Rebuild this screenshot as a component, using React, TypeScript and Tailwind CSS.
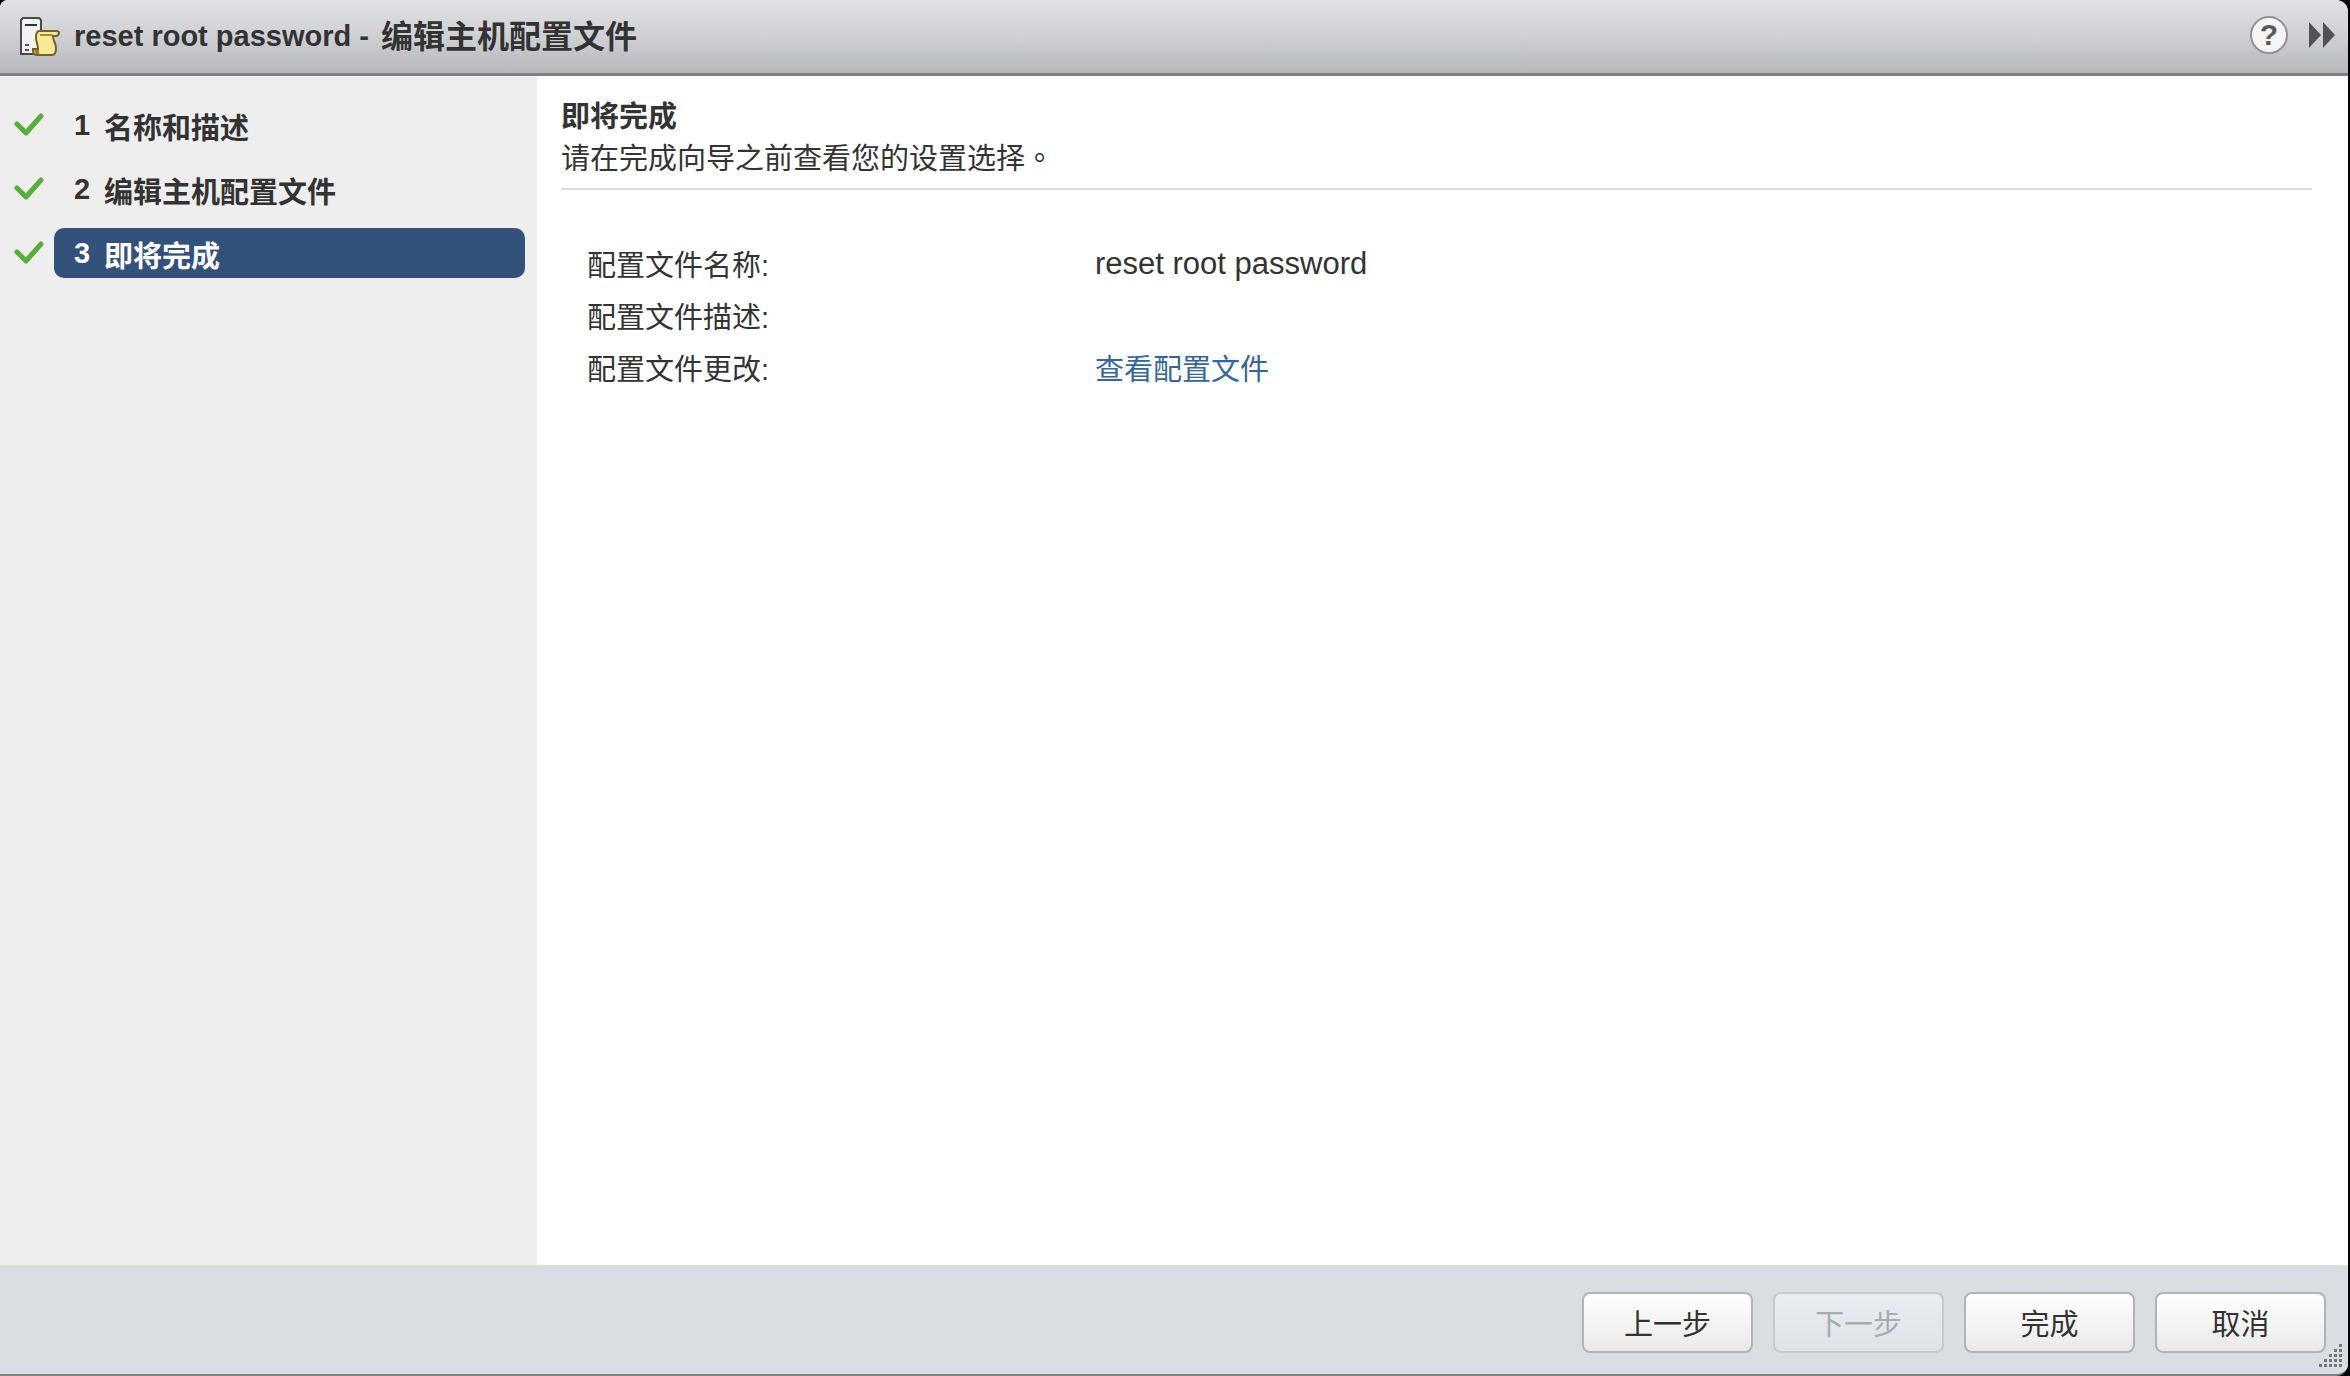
interface Step {
  id: number;
  label: string;
  active?: boolean;
}

interface WizardButton {
  label: string;
  disabled?: boolean;
}

const steps: Step[] = [
  { id: 1, label: '名称和描述' },
  { id: 2, label: '编辑主机配置文件' },
  { id: 3, label: '即将完成', active: true },
];

const buttons: WizardButton[] = [
  { label: '上一步' },
  { label: '下一步', disabled: true },
  { label: '完成' },
  { label: '取消' },
];

function ProfileIcon() {
  return (
    <svg width="40" height="40" viewBox="0 0 40 40" fill="none" aria-hidden="true">
      <path d="M3 1h16l2 2v34H1V3z" fill="#f2f2f3" stroke="#4a4a4a" strokeWidth="2" />
      <path d="M5 8h12" stroke="#333" strokeWidth="2" />
      <path d="M5 28h4M5 33h4" stroke="#555" strokeWidth="2" />
      <path
        d="M19 14h17c2 0 3 1 3 2s-1 3-3 3h-3c0 5 3 7 3 12 0 4-1 7-4 7H17c-2 0-4-2-4-4v-2h5c0-5-2-7-2-11 0-4 1-7 3-7z"
        fill="#f7ea92"
        stroke="#77602a"
        strokeWidth="2"
      />
      <path d="M20 18h13" stroke="#a88d3c" strokeWidth="2" />
      <path d="M14 33h5v4h-3z" fill="#a07f2c" />
    </svg>
  );
}

function CheckIcon() {
  return (
    <svg width="30" height="24" viewBox="0 0 30 24" fill="none" aria-hidden="true">
      <path d="M3 11l9 9L27 3" stroke="#5aae3a" strokeWidth="5" strokeLinecap="round" strokeLinejoin="round" />
    </svg>
  );
}

function ResizeGrip() {
  return (
    <svg width="24" height="24" viewBox="0 0 24 24" fill="#75787b" aria-hidden="true">
      {[0, 1, 2, 3, 4].map((row) =>
        Array.from({ length: row + 1 }, (_, i) => (
          <rect key={`${row}-${i}`} x={21 - i * 5} y={row * 5} width="3" height="3" />
        )),
      )}
    </svg>
  );
}

export default function App() {
  return (
    <div className="min-h-screen flex flex-col bg-black pr-[2px] font-['Liberation_Sans','Noto_Sans_CJK_SC',sans-serif] text-[#333]">
      <div className="relative flex grow flex-col overflow-hidden rounded-tl-lg rounded-tr-xl rounded-br-xl border-b-2 border-[#808284] bg-white">
        <header className="flex h-[76px] items-center justify-between border-b-[3px] border-[#7f8184] bg-linear-to-b from-[#e1e2e6] via-[#cfd0d3] to-[#b7b7bb] pl-5 pr-3">
          <div className="flex items-center gap-[14px]">
            <ProfileIcon />
            <h1 className="flex items-center gap-3 font-bold">
              <span className="pb-[2px] text-[29px] leading-8">reset root password -</span>
              <span className="text-[32px] leading-10">编辑主机配置文件</span>
            </h1>
          </div>
          <div className="flex items-center gap-5 pb-1">
            <button
              aria-label="帮助"
              className="flex size-[38px] items-center justify-center rounded-full border-2 border-[#929396] bg-[#f5f5f5] text-[30px] leading-none font-bold text-[#5a5a5c]"
            >
              ?
            </button>
            <button aria-label="展开">
              <svg width="28" height="26" viewBox="0 0 28 26" fill="#515256" aria-hidden="true">
                <path d="M1 0l12 13L1 26zM15 0l12 13-12 13z" />
              </svg>
            </button>
          </div>
        </header>

        <div className="flex grow">
          <nav className="w-[537px] shrink-0 bg-[#eee] pt-6 pr-3 pl-[14px]">
            <ol className="flex flex-col gap-[14px]">
              {steps.map((step) => (
                <li key={step.id} className="flex items-center gap-[10px]">
                  <CheckIcon />
                  <button
                    className={`flex h-[50px] grow items-center gap-2 rounded-[10px] px-5 text-left text-[29px] font-bold ${
                      step.active ? 'bg-[#33527b] text-white' : ''
                    }`}
                  >
                    <span className="w-[22px] leading-8">{step.id}</span>
                    <span className="pt-2 leading-9">{step.label}</span>
                  </button>
                </li>
              ))}
            </ol>
          </nav>

          <main className="grow pt-5 pr-9 pl-6 text-[29px]">
            <div className="border-b-2 border-[#dcdcdc] pb-2">
              <h2 className="leading-[42px] font-bold">即将完成</h2>
              <p className="leading-[42px]">
                请在完成向导之前查看您的设置选择
                <span className="font-['Noto_Sans_CJK_TC',sans-serif] leading-none">。</span>
              </p>
            </div>
            <dl className="grid grid-cols-[508px_1fr] pt-[50px] pl-[26px] leading-[52px]">
              <dt>配置文件名称:</dt>
              <dd className="text-[31px] leading-12">reset root password</dd>
              <dt>配置文件描述:</dt>
              <dd></dd>
              <dt>配置文件更改:</dt>
              <dd>
                <a href="#profile" className="text-[#3465a0]">
                  查看配置文件
                </a>
              </dd>
            </dl>
          </main>
        </div>

        <footer className="flex h-[109px] items-center justify-end gap-5 bg-[#dadee3] pt-[6px] pr-[22px]">
          {buttons.map((button) => (
            <button
              key={button.label}
              disabled={button.disabled}
              className="h-[61px] w-[171px] rounded-lg border-2 border-[#b1b3b6] bg-linear-to-b from-white to-[#e9e9e9] pt-1 text-[29px] leading-9 disabled:border-[#c6cacd] disabled:from-[#e9edf1] disabled:to-[#dfe3e8] disabled:text-[#a5adae]"
            >
              {button.label}
            </button>
          ))}
        </footer>
        <div className="absolute right-[6px] bottom-[6px]">
          <ResizeGrip />
        </div>
      </div>
    </div>
  );
}
